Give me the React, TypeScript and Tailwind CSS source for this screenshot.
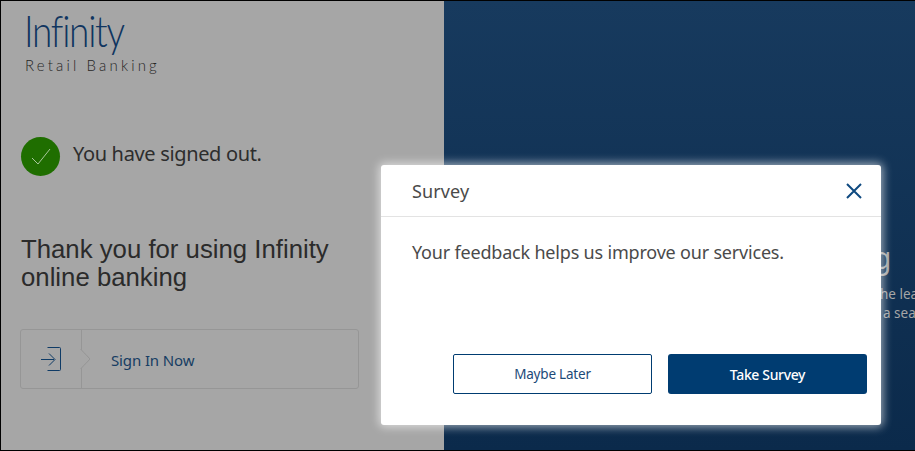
import React from "react";

const sans = "font-['Noto_Sans','Open_Sans',sans-serif]";

function CheckBadge() {
  return (
    <span className="flex h-[39px] w-[39px] shrink-0 items-center justify-center rounded-full bg-[#1f6e00]">
      <svg width="20" height="18" viewBox="0 0 20 18" fill="none" stroke="#a8c79c" strokeWidth="1">
        <path d="M1 10l6 6L19 1" />
      </svg>
    </span>
  );
}

function SignInIcon() {
  return (
    <svg width="20" height="24" viewBox="0 0 20 24" fill="none" stroke="#0f3b66" strokeWidth="1">
      <path d="M6.5 .5h12a1 1 0 0 1 1 1v21a1 1 0 0 1-1 1h-12" />
      <path d="M0 12.5h13M8 6.500l6 6-6 6" />
    </svg>
  );
}

function SignInButton() {
  return (
    <div className="flex h-[60px] w-[339px] rounded-[3px] border border-[#969696]">
      <div className="flex w-[61px] items-center justify-center border-r border-[#969696]">
        <SignInIcon />
      </div>
      <svg className="-ml-[1px] shrink-0 -translate-x-px" width="11" height="58" viewBox="0 0 11 58" fill="#a6a6a6" stroke="#969696">
        <path d="M.5 19l9.500 10-9.500 10z" stroke="none" />
        <path d="M.5 19l9.500 10-9.500 10" />
      </svg>
      <span className={`${sans} ml-[19px] self-center pt-[2px] text-[15px] tracking-[-0.12px] text-[#163d63]`}>Sign In Now</span>
    </div>
  );
}

function LeftPanel() {
  return (
    <section className="flex w-[443px] shrink-0 flex-col bg-[#a6a6a6] pl-[19px]">
      <div className="ml-[4px] mt-[4px] h-[72px]">
        <div className="origin-left scale-x-[0.86] font-['Lato',sans-serif] text-[43px] font-light leading-[51px] tracking-[-1.5px] text-[#0f3560]">Infinity</div>
        <div className="pl-px font-['Lato',sans-serif] text-[15px] font-light leading-[18px] tracking-[3.15px] text-[#262626]">Retail Banking</div>
      </div>
      <div className="mt-[60px] flex items-center gap-[13px] pl-px">
        <CheckBadge />
        <span className={`${sans} -mt-[5px] text-[20px] tracking-[-0.34px] text-[#2d2d2d]`}>You have signed out.</span>
      </div>
      <h1 className="mt-[59px] pl-px font-['Liberation_Sans',sans-serif] text-[25.75px] font-normal leading-[28px] text-[#2b2b2b]">
        Thank you for using Infinity
        <br />
        online banking
      </h1>
      <div className="mt-[38px]">
        <SignInButton />
      </div>
    </section>
  );
}

// only the edge of this panel shows past the modal
function RightPanel() {
  return (
    <section className="min-w-0 flex-1 overflow-hidden bg-gradient-to-b from-[#173a5e] to-[#0b2a4b] pl-[436px] pt-[239px]">
      <h2 className={`${sans} -ml-[7px] whitespace-nowrap text-[30px] font-normal leading-[36px] text-[#a6a6a6]`}>g</h2>
      <p className={`${sans} mt-[9px] whitespace-nowrap text-[13.5px] leading-[19px] text-[#a6a6a6]`}>
        he leading
        <br />
        <span className="pl-[3px]">a seamless</span>
      </p>
    </section>
  );
}

function SurveyModal() {
  return (
    <div className="absolute left-[380px] top-[164px] flex h-[260px] w-[500px] flex-col rounded-[3px] bg-white shadow-[0_0_10px_2px_rgba(255,255,255,0.6)]">
      <header className="flex h-[52px] items-center justify-between border-b border-[#e3e3e3] pl-[31px] pr-[19px]">
        <span className={`${sans} pt-px text-[18px] tracking-[0.1px] text-[#4a4a4a]`}>Survey</span>
        <svg width="16" height="16" viewBox="0 0 16 16" fill="none" stroke="#0f4a80" strokeWidth="2">
          <path d="M1 1l14 14M15 1L1 15" />
        </svg>
      </header>
      <p className={`${sans} mt-[22px] pl-[31px] text-[18px] leading-[26px] tracking-[-0.19px] text-[#4a4a4a]`}>
        Your feedback helps us improve our services.
      </p>
      <div className="mt-auto flex justify-end gap-4 pb-[31px] pr-[14px]">
        <button type="button" className={`${sans} h-10 w-[199px] rounded-[2px] border border-[#003c71] bg-white pt-px text-[13.5px] tracking-[-0.2px] text-[#1d4a78]`}>
          Maybe Later
        </button>
        <button type="button" className={`${sans} h-10 w-[199px] rounded-[3px] bg-[#003c71] text-[14px] font-medium tracking-[-0.35px] text-white`}>
          Take Survey
        </button>
      </div>
    </div>
  );
}

export default function App() {
  return (
    <div className="relative flex h-[451px] w-[915px] overflow-hidden border-b border-l border-t border-black">
      <LeftPanel />
      <RightPanel />
      <SurveyModal />
    </div>
  );
}
